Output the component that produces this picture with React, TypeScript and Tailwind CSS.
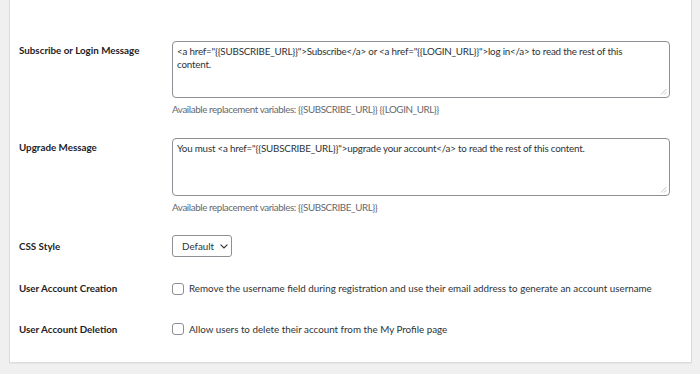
import React from "react";

const Resize = () => (
  <svg className="absolute right-[2px] bottom-[2px]" width="7" height="7" viewBox="0 0 7 7">
    <path d="M6.5 1 L1 6.5 M6.5 4 L4 6.5" stroke="#c3c4c7" strokeWidth="1" />
  </svg>
);

const Checkbox = () => (
  <span className="w-[12px] h-[12px] shrink-0 border border-[#8c8f94] rounded-[3px] mr-[5px] bg-white" />
);

export default function App() {
  return (
    <div className="w-[700px] h-[374px] bg-[#f0f0f1] overflow-hidden font-['Lato',sans-serif] text-[9.8px] text-[#2c3338]">
      <div className="ml-[9px] w-[683px] bg-white border-x border-b border-[#dcdcde] shadow-[0_1px_1px_rgba(0,0,0,0.04)] pt-[41px] pb-[25px] pl-[9px]">
        {/* Row 1 */}
        <div className="flex">
          <div className="w-[153px] pt-[3px] font-bold text-[#1d2327] leading-[13px]">Subscribe or Login Message</div>
          <div>
            <div className="relative w-[498px] h-[57px] border border-[#8c8f94] rounded-[4px] px-[4px] py-[3px] leading-[13px] whitespace-nowrap tracking-[-0.2px]">
              &lt;a href="{"{{SUBSCRIBE_URL}}"}"&gt;Subscribe&lt;/a&gt; or &lt;a href="{"{{LOGIN_URL}}"}"&gt;log in&lt;/a&gt; to read the rest of this
              <br />
              content.
              <Resize />
            </div>
            <div className="mt-[5px] leading-[13px] text-[#646970] tracking-[-0.4px]">
              Available replacement variables: {"{{SUBSCRIBE_URL}}"} {"{{LOGIN_URL}}"}
            </div>
          </div>
        </div>
        {/* Row 2 */}
        <div className="flex mt-[22px]">
          <div className="w-[153px] pt-[3px] font-bold text-[#1d2327] leading-[13px]">Upgrade Message</div>
          <div>
            <div className="relative w-[498px] h-[58px] border border-[#8c8f94] rounded-[4px] px-[4px] py-[3px] leading-[13px] tracking-[-0.2px]">
              You must &lt;a href="{"{{SUBSCRIBE_URL}}"}"&gt;upgrade your account&lt;/a&gt; to read the rest of this content.
              <Resize />
            </div>
            <div className="mt-[5px] leading-[13px] text-[#646970] tracking-[-0.4px]">
              Available replacement variables: {"{{SUBSCRIBE_URL}}"}
            </div>
          </div>
        </div>
        {/* Row 3 */}
        <div className="flex items-center mt-[21px]">
          <div className="w-[153px] font-bold text-[#1d2327] leading-[13px]">CSS Style</div>
          <div className="flex items-center h-[22px] w-[60px] border border-[#8c8f94] rounded-[3px] pl-[9px]">
            <span>Default</span>
            <svg className="ml-[6px]" width="8" height="5" viewBox="0 0 8 5">
              <path d="M0.6 0.6 L4 4 L7.4 0.6" fill="none" stroke="#2c3338" strokeWidth="1.1" />
            </svg>
          </div>
        </div>
        {/* Row 4 */}
        <div className="flex items-center mt-[23.5px] h-[16px]">
          <div className="w-[153px] font-bold text-[#1d2327] leading-[13px]">User Account Creation</div>
          <div className="flex items-center">
            <Checkbox />
            <span className="whitespace-nowrap">Remove the username field during registration and use their email address to generate an account username</span>
          </div>
        </div>
        {/* Row 5 */}
        <div className="flex items-center mt-[24.5px] h-[16px]">
          <div className="w-[153px] font-bold text-[#1d2327] leading-[13px]">User Account Deletion</div>
          <div className="flex items-center">
            <Checkbox />
            <span>Allow users to delete their account from the My Profile page</span>
          </div>
        </div>
      </div>
    </div>
  );
}
